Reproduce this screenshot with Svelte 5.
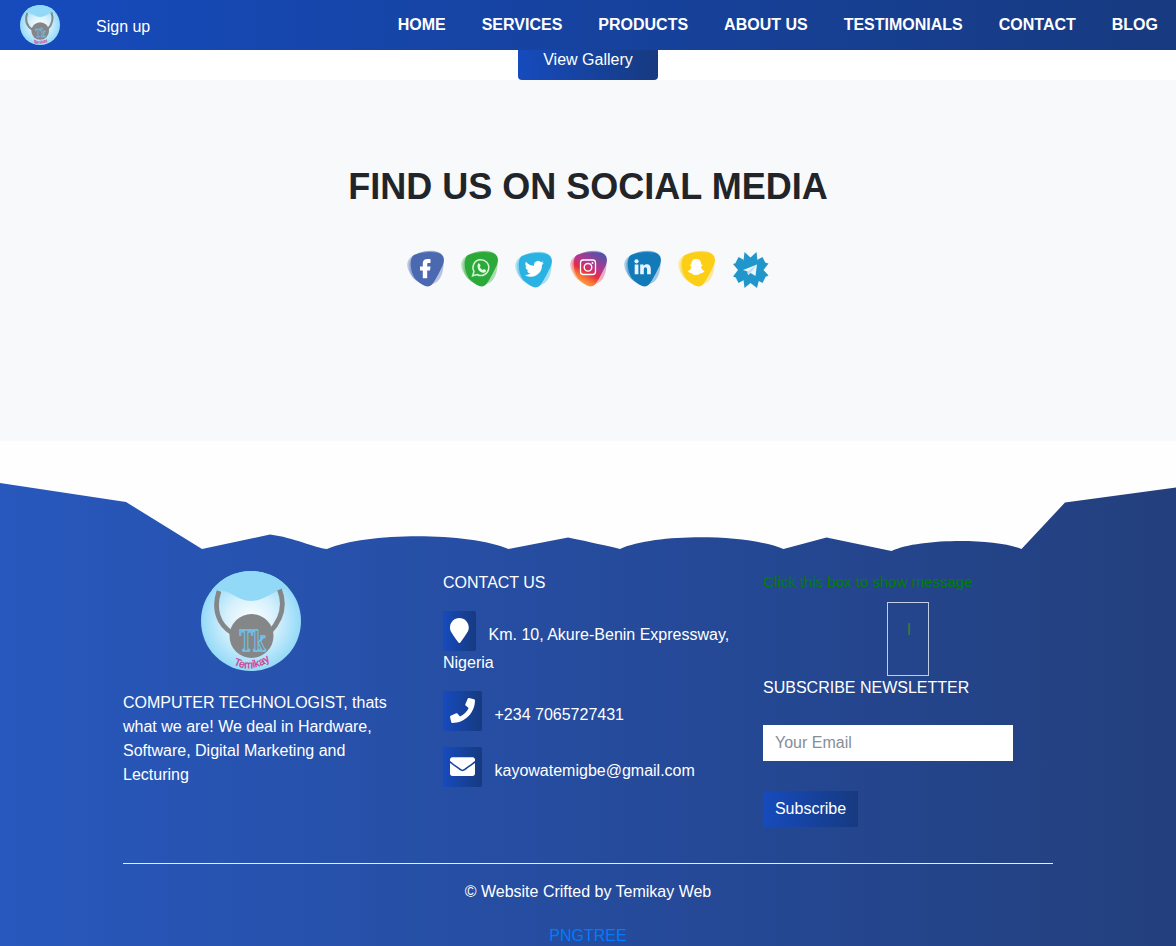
<script>
  const links = ['HOME', 'SERVICES', 'PRODUCTS', 'ABOUT US', 'TESTIMONIALS', 'CONTACT', 'BLOG'];
  const socials = [
    { name: 'facebook', color: '#4a69b0' },
    { name: 'whatsapp', color: '#2caa39' },
    { name: 'twitter', color: '#29b2e2' },
    { name: 'instagram', color: 'url(#insta)' },
    { name: 'linkedin', color: '#137ab9' },
    { name: 'snapchat', color: '#fdce16' },
    { name: 'telegram', color: '#2196cb' }
  ];
</script>

{#snippet logo(id)}
  <svg class="logo" viewBox="0 0 100 100" aria-label="Temikay logo">
    <defs>
      <radialGradient id="{id}-bg"><stop offset="0" stop-color="#fff" /><stop offset=".5" stop-color="#d6f0fc" /><stop offset="1" stop-color="#94daf8" /></radialGradient>
      <clipPath id="{id}-clip"><circle cx="50" cy="50" r="50" /></clipPath>
      <path id="{id}-arc" d="M32.500 93.500Q52 103 71 88" />
    </defs>
    <circle cx="50" cy="50" r="50" fill="url(#{id}-bg)" />
    <path clip-path="url(#{id}-clip)" d="M0 0H100V16L86 17.500C72 19 64 30 50 30S29 18 15 19L0 20Z" fill="#92d9f7" />
    <path d="M18 20C12 38 17 53 31 62M78.500 18.500C85 35 80 49 69 61" fill="none" stroke="#858688" stroke-width="4.800" />
    <circle cx="50.500" cy="65" r="22" fill="#858688" />
    <text x="51.500" y="80" text-anchor="middle" textLength="26" lengthAdjust="spacingAndGlyphs" font-family="'DejaVu Serif', serif" font-weight="700" font-size="27" fill="#858688" stroke="#6fc6ee" stroke-width="1.300">Tk</text>
    <text font-family="'Liberation Sans', sans-serif" font-size="10.500" fill="#d33b91" stroke="#d33b91" stroke-width=".3"><textPath href="#{id}-arc" textLength="39">Temikay</textPath></text>
  </svg>
{/snippet}

<header>
  <div class="brand">{@render logo('nav')}<a href="#signup">Sign up</a></div>
  <nav>{#each links as link}<a href="#top">{link}</a>{/each}</nav>
</header>

<section class="gallery"><a class="gallery-btn" href="#gallery">View Gallery</a></section>

<section class="social">
  <h2>FIND US ON SOCIAL MEDIA</h2>
  <div class="icons">
    {#each socials as s}
      <svg viewBox="0 0 38 40" class={s.name} aria-label={s.name}>
        {#if s.name === 'instagram'}
          <defs><linearGradient id="insta" x1=".15" y1="1" x2=".7" y2="0"><stop offset="0" stop-color="#ffc044" /><stop offset=".25" stop-color="#f77737" /><stop offset=".43" stop-color="#e52d45" /><stop offset=".62" stop-color="#b9358b" /><stop offset="1" stop-color="#5751a8" /></linearGradient></defs>
        {/if}
        {#if s.name === 'telegram'}
          <path d="M12.500 2L18.500 7.500L24.500 2L25.500 10.500L36.500 13.500L31.500 20L36.500 25.500L31 28L27 30L25 38L18.500 33L12.500 38L11.500 30L1 26.500L6 20L1 14L11.500 10.500Z" fill={s.color} />
          <path d="M6.500 7L12 10L8 14L3.500 13ZM30.500 7L25 10L29 14L33.500 13ZM6.500 33L12 30L8 26L3.500 27ZM30.500 33L25 30L29 26L33.500 27Z" fill={s.color} />
          <path d="M11 20L25 14.500L23.500 26L18.500 23L16 25L15.500 21.500Z" fill="#e7f5fc" />
          <path d="M15.500 21.500L25 14.500L18.500 23L16 25Z" fill="#c4dfef" />
        {:else}
          <path d="M4 7C10 2 22 -.5 30 2C37 4 31 29 24 34C18 37 8 32 4 25C0 19 -2 12 4 7Z" fill={s.color} opacity=".34" />
          <path d="M9 5C18 -1 33 -.5 35.500 6C38 15 36 29 28 33C18 38 6 31 3 22C1 13 3 8 9 5Z" fill={s.color} opacity=".38" />
          <path d="M7 5C13 2.200 23 1.200 30 2.500C37.500 4 38.500 10 35 17C31.500 24 28 31 25 34.500C21 38.500 16 36 9.500 30C3.500 25 1.500 8 7 5Z" fill={s.color} />
          {#if s.name === 'facebook'}
            <path d="M15.800 28.300V20.500H13V16.500H15.800V13.700C15.800 9.700 18.300 8.700 23.500 9.200V13H21.500C20.300 13 20.200 13.700 20.200 14.500V16.500H23.500L23 20.500H20.200V28.300Z" fill="#fff" />
          {:else if s.name === 'whatsapp'}
            <path d="M11.600 25.800L13 21.500A7.900 7.900 0 1 1 16 24.500Z" fill="none" stroke="#d5f1d7" stroke-width="1.500" />
            <path d="M17.300 13.200L19 14.100L19.500 16L18.700 17Q19.700 19 21.800 20L23 19L24.800 20L25 21.500Q22.800 24 19 21.500Q14.800 17.500 17.300 13.200Z" fill="#e3f7e3" />
          {:else if s.name === 'twitter'}
            <path transform="translate(10 9.500) scale(.8)" d="M23.600 2.900a9 9 0 0 1-2.800.8A4.900 4.900 0 0 0 23 1a9 9 0 0 1-3.100 1.200 4.900 4.900 0 0 0-8.400 4.500A13.900 13.900 0 0 1 1.300 1.600 4.900 4.900 0 0 0 2.800 8.200a5 5 0 0 1-2.200-.6c0 2.300 1.600 4.400 3.900 4.900a5 5 0 0 1-2.200.1 4.900 4.900 0 0 0 4.600 3.400A9.900 9.900 0 0 1-.2 18 13.900 13.900 0 0 0 21.200 5.600a10 10 0 0 0 2.400-2.700Z" fill="#fff" />
          {:else if s.name === 'instagram'}
            <g fill="none" stroke="#fff"><rect x="10.500" y="10" width="15" height="14.500" rx="2.800" stroke-width="1.300" /><circle cx="18" cy="17.300" r="3.800" stroke-width="1.400" /></g><circle cx="22.500" cy="13.100" r="1" fill="#fff" />
          {:else if s.name === 'linkedin'}
            <circle cx="12.500" cy="11.300" r="2.100" fill="#e7f4fd" /><path d="M10.700 14.500H14.400V24.300H10.700ZM16.200 14.500H19.500V16C21.200 13.400 26.800 13.300 26.800 19V24.300H23.100V19.500C23.100 16.500 19.800 16.500 19.800 19.500V24.300H16.200Z" fill="#e7f4fd" />
          {:else}
            <path d="M18 9C21.500 9 23.300 11 23.100 14.500L24.500 14.700C24.800 16 23.500 16.100 23 16.700C23.300 19.100 25 20.300 26.500 21C26 22.500 25 22 24.300 23C22.500 22.800 21.500 25 18 25S14 22.800 12 23C11.500 22 10.500 22.500 9.700 21C12 20.300 13 19.100 13.500 16.700C13 16.100 11.700 16 12 14.700L13.400 14.500C13.200 11 15 9 18 9Z" fill="#fff" />
          {/if}
        {/if}
      </svg>
    {/each}
  </div>
</section>

<footer>
  <svg class="wave" viewBox="0 0 1176 129"><path d="M0 0H1176V46.500L1065 61.500L1021.500 108C996 97 919 97 891.500 110L826.500 96.500L783.500 108C748 93 656 92 620 108Q602 103.500 568 96.500L508.500 108C469 91 366 91 327 108C315 107 294 96.500 270 93.500L202 108L126 61L0 42Z" fill="#fefefe" /></svg>
  <div class="container">
    <div class="columns">
      <div class="about">
        {@render logo('foot')}
        <p>COMPUTER TECHNOLOGIST, thats what we are! We deal in Hardware, Software, Digital Marketing and Lecturing</p>
      </div>
      <div class="contact">
        <div class="title">CONTACT US</div>
        <p><span class="tile pin"><svg viewBox="0 0 384 512"><path d="M172.300 501.700C27 291 0 269.400 0 192 0 86 86 0 192 0s192 86 192 192c0 77.400-27 99-172.300 309.700a24 24 0 0 1-39.400 0Z" /></svg></span>Km. 10, Akure-Benin Expressway, Nigeria</p>
        <p><span class="tile"><svg viewBox="0 0 512 512"><path d="M493.400 24.600l-104-24c-11.300-2.600-22.900 3.300-27.500 13.900l-48 112c-4.200 9.800-1.400 21.300 6.900 28l60.600 49.600c-36 76.700-98.900 140.500-177.200 177.200l-49.600-60.600c-6.800-8.300-18.200-11.100-28-6.900l-112 48C3.900 366.500-2 378.100.6 389.400l24 104C27.100 504.200 36.700 512 48 512c256.100 0 464-207.500 464-464 0-11.200-7.700-20.900-18.600-23.400z" /></svg></span>+234 7065727431</p>
        <p><span class="tile"><svg viewBox="0 0 512 512"><path d="M502.300 190.800c3.900-3.100 9.700-.2 9.700 4.700V400c0 26.500-21.500 48-48 48H48c-26.500 0-48-21.500-48-48V195.600c0-5 5.700-7.800 9.700-4.700 22.400 17.400 52.100 39.500 154.100 113.600 21.100 15.400 56.700 47.800 92.200 47.600 35.700.3 72-32.800 92.300-47.600 102-74.100 131.600-96.300 154-113.700zM256 320c23.200.4 56.600-29.200 73.400-41.400 132.700-96.300 142.800-104.700 173.400-128.700 5.800-4.500 9.200-11.500 9.200-18.900v-19c0-26.500-21.500-48-48-48H48c-26.500 0-48 21.500-48 48v19c0 7.400 3.400 14.300 9.200 18.900 30.600 23.900 40.700 32.400 173.400 128.700 16.800 12.200 50.200 41.800 73.400 41.400z" /></svg></span>kayowatemigbe@gmail.com</p>
      </div>
      <div class="news">
        <div class="message">Click this box to show message</div>
        <div class="box">I</div>
        <div class="label">SUBSCRIBE NEWSLETTER</div>
        <input type="email" placeholder="Your Email" />
        <button>Subscribe</button>
      </div>
    </div>
    <div class="copyright">© Website Crifted by Temikay Web</div>
    <a class="credit" href="#credit">PNGTREE</a>
  </div>
</footer>

<style>
  :global(body) { margin: 0; overflow: hidden; }
  :global(#app) { height: 946px; overflow: hidden; background: #fff; font: 16px/24px 'Liberation Sans', Arial, sans-serif; }
  a { text-decoration: none; color: #fff; }
  .logo { display: block; }
  header { height: 50px; box-sizing: border-box; display: flex; justify-content: space-between; padding: 0 18px 0 20px; background: linear-gradient(to right, #164bbd, #173a80); }
  .brand { display: flex; align-items: center; gap: 36px; }
  .brand .logo { width: 40px; height: 40px; }
  .brand a { padding-top: 3px; }
  nav { display: flex; gap: 36px; padding-top: 13px; font-weight: 700; }
  .gallery { height: 30px; display: flex; justify-content: center; }
  .gallery-btn { width: 140px; height: 30px; line-height: 20px; text-align: center; border-radius: 0 0 4px 4px; background: linear-gradient(to right, #164bbd, #173a80); }
  .social { height: 361px; box-sizing: border-box; padding-top: 85px; background: #f8f9fb; }
  h2 { margin: 0; font-size: 36px; line-height: 44px; text-align: center; color: #212529; }
  .icons { display: flex; justify-content: center; gap: 16.300px; margin-top: 41px; padding-left: 1px; }
  .icons svg { width: 38px; height: 40px; }
  .icons .twitter { margin-top: 1px; }
  footer { background: linear-gradient(to right, #2858bd, #233f7d); color: #fff; }
  .wave { display: block; width: 100%; height: 129px; }
  .container { width: 930px; margin: 0 auto; display: flex; flex-direction: column; align-items: center; }
  .columns { width: 930px; height: 294px; box-sizing: border-box; border-bottom: 1px solid #e8ecf3; display: grid; grid-template-columns: 290px 290px 290px; gap: 30px; }
  p { margin: 0 0 16px; }
  .about .logo { width: 100px; height: 100px; margin: 1px 0 20px 78px; }
  .about p { width: 275px; }
  .title { padding-top: 1px; margin-bottom: 16px; }
  .tile { display: inline-flex; width: 39px; height: 40px; align-items: center; justify-content: center; vertical-align: -3px; margin-right: 12.500px; padding-bottom: 1px; box-sizing: border-box; border-radius: 2px; background: linear-gradient(to right, #164bbd, #173a80); }
  .tile svg { width: 25px; height: 25px; fill: #fff; }
  .pin { width: 33px; }
  .pin svg { width: 18.750px; }
  .message { padding-bottom: 1px; color: green; font-size: 15px; }
  .box { width: 42px; height: 74px; margin: 7px auto 0; margin-bottom: -1px; box-sizing: border-box; border: 1px solid #c3cee4; color: #3d7b46; padding: 15px 0 0 2px; text-align: center; }
  .label { padding-top: 1px; }
  input { display: block; width: 250px; height: 36px; box-sizing: border-box; margin: 25px 0 30px; padding: 0 12px; border: 0; background: #fff; font: inherit; }
  input::placeholder { color: #868e96; }
  button { width: 95px; height: 36px; padding: 0; border: 0; color: #fff; font: inherit; background: linear-gradient(to right, #164bbd, #173a80); }
  .copyright { margin-top: 16px; }
  .credit { margin-top: 20px; color: #007bff; }
</style>
